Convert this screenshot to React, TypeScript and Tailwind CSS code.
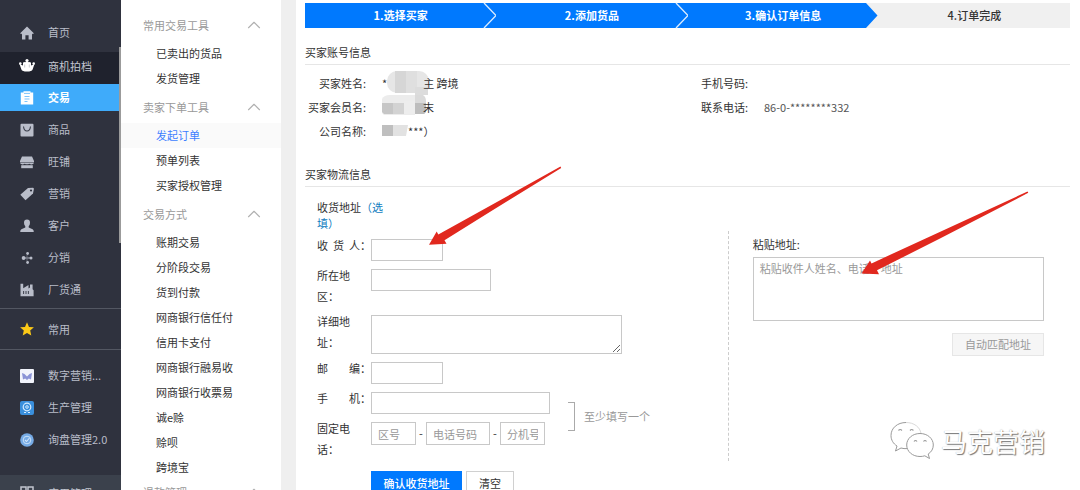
import type { ReactNode } from "react";
import { ChevronUp } from "lucide-react";
import clsx from "clsx";

type NavItem = { label: string; icon: ReactNode; state?: "dark" | "active" };

const mainNav: NavItem[] = [
  {
    label: "商机拍档",
    state: "dark",
    icon: (
      <g fill="#fff">
        <circle cx="7" cy="1.5" r="1.6" />
        <circle cx="0.3" cy="4.6" r="1.3" />
        <circle cx="13.7" cy="4.6" r="1.3" />
        <path d="M-0.400 5.200 3 6.400V4Q3.600 2.600 5 3.200L7 2.400 9 3.200Q10.400 2.600 11 4V6.400L14.400 5.200 12.600 10.600Q11.800 12.600 7 12.600T1.400 10.600Z" />
        <path d="M4.700 5.500V8.500M9.300 5.500V8.500" stroke="#8d909b" strokeWidth="0.500" />
      </g>
    ),
  },
  {
    label: "交易",
    state: "active",
    icon: (
      <g>
        <path d="M0.800 1.500h2.700V0.300h7v1.200H13.200V13.600H0.800Z" fill="#fff" />
        <path d="M4 2.400h6M4.500 5.500h5M4.500 8h5M4.500 10.500h3" stroke="#7cc4fb" strokeWidth="1" />
      </g>
    ),
  },
  {
    label: "商品",
    icon: (
      <g>
        <rect x="0.500" y="0.800" width="13" height="12.800" rx="1" fill="#b9bdc9" />
        <path d="M3.500 3.500Q4 8 7 8T10.500 3.500" fill="none" stroke="#3a3e4b" strokeWidth="1.100" />
      </g>
    ),
  },
  {
    label: "旺铺",
    icon: (
      <g fill="#b9bdc9">
        <path d="M2 1.500h10l2 4.500v1H0V6Z" />
        <path d="M0 7.600h14Q13.800 9 12.300 9.300T9.300 8.700Q7 10 4.700 8.700 3.200 9.600 1.700 9.300T0 7.600Z" />
        <path d="M1.200 10.200h11.600v3H1.200Z" />
      </g>
    ),
  },
  {
    label: "营销",
    icon: (
      <g>
        <path d="M8 1 13 0.800Q14 1 13.900 2L13 6.500 5.500 13.300 0.300 7.800Z" fill="#b9bdc9" />
        <circle cx="11" cy="3.500" r="1.100" fill="#2f323e" />
      </g>
    ),
  },
  {
    label: "客户",
    icon: (
      <path
        d="M7 0.600Q10 0.600 10 3.800 10 6 8.700 7.200V8.600L12.600 10.300Q13.800 10.900 13.800 13H0.200Q0.200 10.900 1.400 10.300L5.300 8.600V7.200Q4 6 4 3.800 4 0.600 7 0.600Z"
        fill="#b9bdc9"
      />
    ),
  },
  {
    label: "分销",
    icon: (
      <g fill="#b9bdc9">
        <circle cx="3.600" cy="7" r="1.900" />
        <circle cx="7.600" cy="2.500" r="1.400" />
        <circle cx="7.600" cy="11.500" r="1.400" />
        <circle cx="11" cy="7" r="1.500" />
        <path d="M4 7h6.500M7 4.600v0.900M7 8.500v0.900" stroke="#b9bdc9" strokeWidth="0.900" />
      </g>
    ),
  },
  {
    label: "厂货通",
    icon: (
      <g>
        <path d="M0.500 0.800h2.700v4.500L8.500 2v3.600l1.500-1V1.600h2.600v4.600l1 1.100V13.200H0.500Z" fill="#b9bdc9" />
        <path d="M3.600 8v3M6 8v3M8.400 8v3" stroke="#2f323e" strokeWidth="0.900" />
      </g>
    ),
  },
];

const appNav: NavItem[] = [
  {
    label: "数字营销...",
    icon: (
      <g>
        <rect width="14" height="14" rx="1" fill="#f1f3fb" />
        <path d="M2 4 4.500 5 7 7.500 9.500 5 12 4 11 10.500 8.800 9.500 7 11 5.200 9.500 3 10.500Z" fill="#8a93d6" />
      </g>
    ),
  },
  {
    label: "生产管理",
    icon: (
      <g fill="none" stroke="#d6ecff">
        <rect width="14" height="14" rx="2" fill="#3a8fdc" stroke="none" />
        <circle cx="7" cy="6" r="3.800" strokeWidth="1.200" />
        <circle cx="7" cy="6" r="1.300" strokeWidth="1" />
        <path d="M4 11.500h2M8 11.500h2" />
      </g>
    ),
  },
  {
    label: "询盘管理2.0",
    icon: (
      <g fill="none" stroke="#d3e6fb">
        <circle cx="7" cy="7" r="6.800" fill="#76abe6" stroke="none" />
        <circle cx="7" cy="7" r="3.800" strokeWidth="0.900" />
        <path d="M5 7l1.500 1.500L9.500 5" strokeWidth="1.100" />
      </g>
    ),
  },
];

const menuGroups = [
  { title: "常用交易工具", items: ["已卖出的货品", "发货管理"] },
  { title: "卖家下单工具", items: ["发起订单", "预单列表", "买家授权管理"] },
  {
    title: "交易方式",
    items: [
      "账期交易",
      "分阶段交易",
      "货到付款",
      "网商银行信任付",
      "信用卡支付",
      "网商银行融易收",
      "网商银行收票易",
      "诚e赊",
      "赊呗",
      "跨境宝",
    ],
  },
  { title: "退款管理", items: [] },
];

const inputClass =
  "block border border-[#c8c8c8] bg-white px-[6px] text-[11px] text-[#333] placeholder:text-[#999] outline-none";

function NavLink({ item }: { item: NavItem }) {
  return (
    <a
      href="#"
      className={clsx(
        "flex shrink-0 items-center gap-[14px] pl-5 text-[11px] whitespace-nowrap",
        item.state === "dark" && "h-8 bg-[#1f222d] pb-1 text-[#c3c6d0]",
        item.state === "active" && "mb-[5px] h-[27px] bg-[#3fabfa] font-bold text-white",
        !item.state && "mb-[5px] h-[27px] text-[#b9bdc9]"
      )}
    >
      <svg viewBox="0 0 14 14" className="size-[14px] shrink-0 overflow-visible">
        {item.icon}
      </svg>
      {item.label}
    </a>
  );
}

function Sidebar() {
  return (
    <nav className="relative flex w-[121px] shrink-0 flex-col bg-[#2f323e] pt-[19px]">
      <a href="#" className="mb-[6px] flex h-[27px] shrink-0 items-center gap-[14px] pl-5 text-[11px] text-[#b9bdc9]">
        <svg viewBox="0 0 14 14" className="size-[14px]">
          <path d="M7 0.600 13.800 7.200 12.900 8.200 12 7.600V13.400H8.600V9.200H5.400V13.400H2V7.600L1.100 8.200 0.200 7.200Z" fill="#b9bdc9" />
        </svg>
        首页
      </a>
      {mainNav.map((item) => (
        <NavLink key={item.label} item={item} />
      ))}
      <a
        href="#"
        className="flex h-[42px] shrink-0 items-center gap-[14px] border-t border-b border-[#535762] pl-5 text-[11px] text-[#b9bdc9]"
      >
        <svg viewBox="0 0 14 14" className="size-[14px]">
          <path d="M7 0.300 9 4.900 13.900 5.300 10.200 8.600 11.300 13.500 7 10.900 2.700 13.500 3.800 8.600 0.100 5.300 5 4.900Z" fill="#fcc917" />
        </svg>
        常用
      </a>
      <div className="shrink-0 pt-3">
        {appNav.map((item) => (
          <NavLink key={item.label} item={item} />
        ))}
      </div>
      <a
        href="#"
        className="mt-[17px] flex h-9 shrink-0 items-center gap-[14px] bg-[#3b414c] pl-5 text-[11px] text-[#c3c6d0]"
      >
        <svg viewBox="0 0 14 14" className="size-[14px]" fill="none" stroke="#c3c6d0" strokeWidth="1.500">
          <path d="M1 1h5v5H1ZM8 1h5v5H8ZM1 8h5v5H1ZM8 8h5v5H8Z" />
        </svg>
        应用管理
      </a>
      <span className="absolute top-[47px] right-0 h-[196px] w-[2px] bg-[#9b9b9b]" />
    </nav>
  );
}

function SubMenu() {
  return (
    <aside className="w-[175px] shrink-0 border-r-[15px] border-[#efefef] bg-white pt-[9px] text-[11px]">
      {menuGroups.map((group) => (
        <section key={group.title}>
          <h3
            className={clsx(
              "flex items-center justify-between pr-4 pl-[22px] text-[#999]",
              group.items.length ? "h-8" : "h-6"
            )}
          >
            {group.title}
            <ChevronUp className="size-[22px] text-[#b0b0b0]" strokeWidth={1.2} />
          </h3>
          <ul>
            {group.items.map((name) => (
              <li key={name}>
                <a
                  href="#"
                  className={clsx(
                    "flex h-[25px] items-center pl-[35px]",
                    name === "发起订单" ? "bg-[#fafafa] text-[#3d7eff]" : "text-[#333]"
                  )}
                >
                  {name}
                </a>
              </li>
            ))}
          </ul>
        </section>
      ))}
    </aside>
  );
}

function Steps() {
  const steps = ["1.选择买家", "2.添加货品", "3.确认订单信息", "4.订单完成"];

  return (
    <ol className="grid h-[25px] grid-cols-4 text-[11px] font-bold">
      {steps.map((step, i) => (
        <li
          key={step}
          className={clsx(
            "relative flex items-center justify-center",
            i < 3 ? "bg-[#0079fe] text-white" : "bg-[#f0f0f0] font-medium text-[#333]"
          )}
        >
          {step}
          {i < 3 && (
            <svg viewBox="0 0 13 25" className="absolute top-0 right-0 h-full w-[13px] overflow-visible">
              {i < 2 ? (
                <path d="M1 0 13 12.500 1 25" fill="none" stroke="#d9ecff" strokeWidth="1.300" />
              ) : (
                <path d="M0 0 11.500 12.500 0 25H14V0Z" fill="#f0f0f0" />
              )}
            </svg>
          )}
        </li>
      ))}
    </ol>
  );
}

function SectionTitle({ children }: { children: ReactNode }) {
  return (
    <h2 className="flex h-[25px] items-center border-b border-[#e6e6e6] text-[11px] text-[#333]">{children}</h2>
  );
}

function InfoRow({ label, children }: { label: string; children?: ReactNode }) {
  return (
    <div className="flex h-6 items-center gap-4">
      <dt className="w-[61px] text-right">{label}</dt>
      <dd className="flex items-center whitespace-pre">{children}</dd>
    </div>
  );
}

function BuyerInfo() {
  return (
    <div className="flex pt-[6px] pb-[19px] text-[11px] text-[#333]">
      <dl className="w-[382px] shrink-0">
        <InfoRow label="买家姓名:">
          *
          <svg viewBox="0 0 42 24" className="-mr-[6px] h-6 w-[42px]">
            <rect y="0" width="42" height="22" rx="10" fill="#e6e6e6" />
            <path d="M8 0h11v22H8Z" fill="#d6d6d6" />
            <path d="M19 0h11v22H19Z" fill="#dfdfdf" />
            <path d="M28 16h13v8H28Z" fill="#dcdcdc" />
          </svg>
          主 跨境
        </InfoRow>
        <InfoRow label="买家会员名:">
          <svg viewBox="0 0 44 24" className="-mr-[3px] h-6 w-11">
            <path d="M0 4Q2 0 8 0H33V20H2L0 18Z" fill="#ececec" />
            <path d="M0 8h22v11H2L0 17Z" fill="#c6c6c6" />
            <path d="M11 8h11v11H11Z" fill="#d3d3d3" />
            <path d="M22 6h11v13H22Z" fill="#ededed" />
            <path d="M33 0h8Q44 2 44 6V17L42 19H33Z" fill="#dadada" />
            <path d="M33 8h11v9L42 19H33Z" fill="#bdbdbd" />
          </svg>
          末
        </InfoRow>
        <InfoRow label="公司名称:">
          <svg viewBox="0 0 26 24" className="h-6 w-[26px]">
            <path d="M0 6h11v11H0Z" fill="#bfbfbf" />
            <path d="M11 6h15l-2 11H11Z" fill="#e2e2e2" />
          </svg>
          ***）
        </InfoRow>
      </dl>
      <dl>
        <InfoRow label="手机号码:" />
        <InfoRow label="联系电话:">
          <span className="text-[#555]">86-0-********332</span>
        </InfoRow>
      </dl>
    </div>
  );
}

function FormRow({ id, label, children }: { id: string; label: string[]; children: ReactNode }) {
  return (
    <div className="flex items-start">
      <label htmlFor={id} className="flex w-[54px] shrink-0 justify-between leading-[21px]">
        {label.map((part) => (
          <span key={part}>{part}</span>
        ))}
      </label>
      <div className="flex items-center pt-1">{children}</div>
    </div>
  );
}

function AddressForm() {
  return (
    <form className="flex flex-col gap-1 pt-3 pl-3 text-[11px] text-[#333]">
      <p className="w-[68px] leading-4">
        收货地址<span className="text-[#0f7cc0]">（选填）</span>
      </p>
      <FormRow id="receiver" label={["收", "货", "人："]}>
        <input id="receiver" className={clsx(inputClass, "h-[22px] w-[72px]")} />
      </FormRow>
      <FormRow id="area" label={["所在地区："]}>
        <input id="area" className={clsx(inputClass, "h-[22px] w-[120px]")} />
      </FormRow>
      <FormRow id="street" label={["详细地址："]}>
        <textarea id="street" className={clsx(inputClass, "h-[39px] w-[251px] resize")} />
      </FormRow>
      <FormRow id="zip" label={["邮", "编："]}>
        <input id="zip" className={clsx(inputClass, "h-[22px] w-[72px]")} />
      </FormRow>
      <div className="flex items-start">
        <div className="flex flex-col gap-1">
          <FormRow id="mobile" label={["手", "机："]}>
            <input id="mobile" className={clsx(inputClass, "h-[22px] w-[179px]")} />
          </FormRow>
          <FormRow id="phone" label={["固定电话："]}>
            <input id="phone" placeholder="区号" className={clsx(inputClass, "h-[23px] w-[45px]")} />
            <span className="w-[10px] text-center">-</span>
            <input aria-label="电话号码" placeholder="电话号码" className={clsx(inputClass, "h-[23px] w-[64px]")} />
            <span className="w-[10px] text-center">-</span>
            <input aria-label="分机号" placeholder="分机号" className={clsx(inputClass, "h-[23px] w-[45px]")} />
          </FormRow>
        </div>
        <div className="mt-[14px] ml-[18px] flex h-[29px] items-center gap-[9px] text-[#999]">
          <span className="h-full w-[7px] border border-l-0 border-[#aaa]" />
          至少填写一个
        </div>
      </div>
      <div className="flex gap-1 pt-[7px] pl-[54px]">
        <button type="button" className="h-6 w-[91px] bg-[#0079fe] font-medium text-white">
          确认收货地址
        </button>
        <button type="button" className="h-6 w-12 border border-[#d0d0d0] bg-white">
          清空
        </button>
      </div>
    </form>
  );
}

function PasteAddress() {
  return (
    <div className="mt-11 mb-[34px] border-l border-dashed border-[#ccc] pt-1 pr-[26px] pl-6 text-[11px]">
      <label htmlFor="paste" className="block pb-1 leading-[18px] text-[#333]">
        粘贴地址:
      </label>
      <textarea
        id="paste"
        placeholder="粘贴收件人姓名、电话、地址"
        className={clsx(inputClass, "h-16 w-full resize-none pt-[2px]")}
      />
      <div className="flex justify-end pt-3">
        <button type="button" className="h-[23px] w-[92px] border border-[#e6e6e6] bg-[#f6f6f6] text-[#999]">
          自动匹配地址
        </button>
      </div>
    </div>
  );
}

function Watermark() {
  return (
    <div className="absolute right-[35px] bottom-[29px] flex items-center gap-[7px]">
      <svg viewBox="0 0 44 40" className="h-10 w-11" fill="#fff" stroke="#9a9a9a" strokeLinejoin="round">
        <path d="M16 1.500C7.500 1.500 1 7 1 14.500c0 4.500 2.300 8.200 6 10.500L5.500 30l5.500-3c2 .6 4 .8 6 .6" strokeWidth="1" />
        <path d="M16 1.500c8 0 14 4.500 15 11" stroke="#d5d5d5" strokeWidth="0.900" />
        <path d="M30 12.500c-7.500 0-13.300 5-13.300 11.500S22.500 35.500 30 35.500c1.700 0 3.300-.2 4.800-.7L39.500 37.500 38.200 33C41.500 31 43.300 27.700 43.300 24c0-6.500-5.800-11.500-13.300-11.500Z" strokeWidth="1" />
        <path d="M8.500 9.500q1.700-2 3.400 0M20 9.500q1.700-2 3.400 0M24 20.500q1.500-2 3 0M33.500 20.500q1.500-2 3 0" fill="none" strokeWidth="1.200" />
      </svg>
      <span className="text-[26px] leading-10 text-white [text-shadow:1px_1px_1px_#777,0_0_1px_#aaa]">马克营销</span>
    </div>
  );
}

export default function App() {
  return (
    <div className="relative flex h-screen overflow-hidden bg-white font-['Noto_Sans_CJK_SC',sans-serif]">
      <Sidebar />
      <SubMenu />
      <main className="min-w-0 flex-1 pt-[3px] pr-[10px] pl-[9px]">
        <Steps />
        <div className="pt-3">
          <SectionTitle>买家账号信息</SectionTitle>
          <BuyerInfo />
          <SectionTitle>买家物流信息</SectionTitle>
        </div>
        <div className="grid grid-cols-[21fr_17fr]">
          <AddressForm />
          <PasteAddress />
        </div>
      </main>
      <Watermark />
      <svg className="pointer-events-none absolute top-0 left-0 h-[490px] w-[1080px]" fill="#e1281e">
        <path d="M429 244.800 436.700 231.500 438.300 234.600 560.500 166.500 561.200 168 493 210 444.500 240.300 446.500 243.800Z" />
        <path d="M861.500 273.500 870 260.500 871.500 263.400 1027.500 191.500 1028.300 192.800 940 238.500 877 270.300 879 274.200Z" />
      </svg>
    </div>
  );
}
